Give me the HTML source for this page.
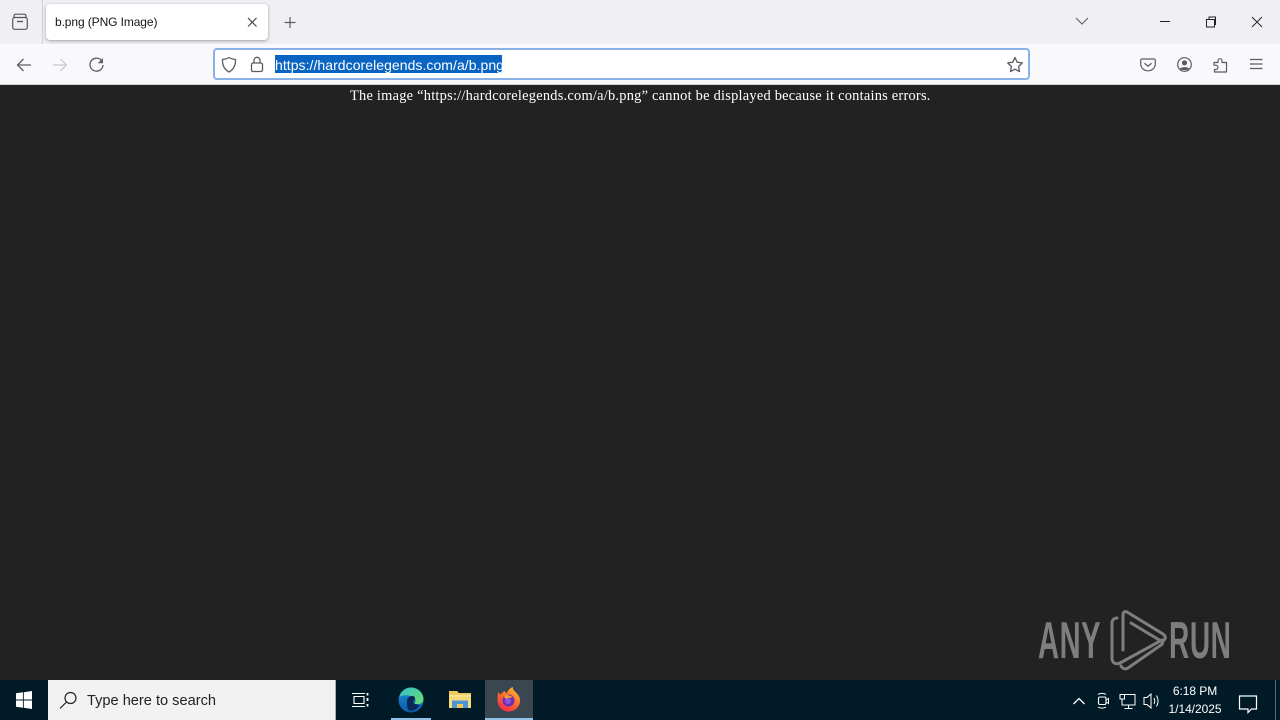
<!DOCTYPE html>
<html><head><meta charset="utf-8"><style>
html,body{margin:0;padding:0;width:1280px;height:720px;overflow:hidden;background:#222222;font-family:"Liberation Sans",sans-serif}
.a{position:absolute;white-space:nowrap}
svg{position:absolute;overflow:visible}
</style></head><body>
<div class="a" style="left:0;top:0;width:1280px;height:44px;background:#f0f0f4"></div>
<div class="a" style="left:0;top:44px;width:1280px;height:40px;background:#f9f9fb"></div>
<div class="a" style="left:0;top:84px;width:1280px;height:1px;background:#d4d4d8"></div>
<div class="a" style="left:42px;top:0;width:1px;height:44px;background:#cfcfd8"></div>

<svg style="left:0;top:0" width="1280" height="85" fill="none" stroke="#55555c" stroke-width="1.200">
<path d="M14 17.500V15.800a1.600 1.600 0 0 1 1.600-1.600h8.800a1.600 1.600 0 0 1 1.600 1.600v1.700"/>
<rect x="12.700" y="17.500" width="14.600" height="11.800" rx="2"/>
<path d="M17 21.500h6" stroke-width="1.400"/>
<path d="M290 17v11M284.500 22.500h11" stroke="#5c5c63"/>
<path d="M1076 18l6 6 6-6" stroke="#66666d"/>
<path d="M1160 21.500h10" stroke="#222" stroke-width="1"/>
<rect x="1206.500" y="19.500" width="8" height="7.500" stroke="#222" stroke-width="1"/>
<path d="M1209 19v-2h6.500v7.500h-1.500" stroke="#222" stroke-width="1"/>
<path d="M1252 17l10 10M1262 17l-10 10" stroke="#222" stroke-width=".9"/>
<path d="M31 65H17.500M23.500 59l-6 6 6 6" stroke="#5c5c63" stroke-width="1.300"/>
<path d="M53 65h13.500M60.500 59l6 6-6 6" stroke="#c6c6cc" stroke-width="1.200"/>
<path d="M101.500 60.500A6.500 6.500 0 1 0 103 65" stroke="#5c5c63" stroke-width="1.300"/>
<path d="M103 58v5.200h-5.200z" fill="#5c5c63" stroke="none"/>
<path d="M1142 59h12a1.300 1.300 0 0 1 1.300 1.300V64a7.300 6.800 0 0 1-14.600 0v-3.700A1.300 1.300 0 0 1 1142 59z" stroke="#5b5b63" stroke-width="1.200"/>
<path d="M1144.500 63.200l3.500 3 3.500-3" stroke="#5b5b63" stroke-width="1.300"/>
<circle cx="1184.500" cy="64.500" r="6.800" stroke="#5b5b63" stroke-width="1.200"/>
<circle cx="1184.500" cy="62.800" r="2.600" fill="#5b5b63" stroke="none"/>
<path d="M1179.800 68.800c1.500-2.200 7.900-2.200 9.400 0-1.500 1.700-7.900 1.700-9.400 0z" fill="#5b5b63" stroke="none"/>
<path d="M1214 62.500h4v-1.800a2 2 0 0 1 4 0v1.800h4.500v9.500h-12v-2.500h1.300a2 2 0 0 0 0-4.300H1214z" stroke="#5b5b63" stroke-width="1.200" stroke-linejoin="round"/>
<path d="M1250 59.500h12.500M1250 64h12.500M1250 68.500h12.500" stroke="#5b5b63" stroke-width="1.200"/>
</svg>

<div class="a" style="left:46px;top:4px;width:222px;height:36px;background:#fff;border-radius:4px;box-shadow:0 1px 3px rgba(0,0,0,.35)"></div>
<div class="a" style="left:55px;top:15px;font-size:12px;line-height:15px;color:#15141a;letter-spacing:-.1px">b.png (PNG Image)</div>
<svg style="left:0;top:0" width="1280" height="40" fill="none" stroke="#4a4a52" stroke-width="1.200"><path d="M248 18l8.500 8.500M256.500 18l-8.500 8.500"/></svg>

<div class="a" style="left:213px;top:48px;width:813px;height:28px;background:#fff;border:2px solid #8ab0e8;border-radius:4px"></div>
<div class="a" style="left:275px;top:55px;width:227px;height:18px;background:#0a64c2"></div>
<div class="a" style="left:275px;top:56px;font-size:14px;line-height:18px;color:#fff;letter-spacing:.05px">https://hardcorelegends.com/a/b.png</div>
<svg style="left:0;top:0" width="1280" height="85" fill="none" stroke="#5b5b63" stroke-width="1.300">
<path d="M229 57.500c2 1.300 4 1.800 6.500 2 .3 6-2 10-6.500 12.500-4.500-2.500-6.800-6.500-6.500-12.500 2.500-.2 4.500-.7 6.500-2z"/>
<rect x="251.500" y="63" width="11" height="8.500" rx="1.500"/>
<path d="M254 63v-2.700a3 3 0 0 1 6 0V63"/>
<path d="M1015 57.500l2.200 4.700 5.100.7-3.700 3.600.9 5.100-4.500-2.400-4.500 2.400.9-5.100-3.700-3.600 5.100-.7z" stroke-linejoin="round"/>
</svg>

<div class="a" style="left:350px;top:88px;font-family:'Liberation Serif',serif;font-size:14.400px;line-height:17px;color:#fff;letter-spacing:.24px">The image “https://hardcorelegends.com/a/b.png” cannot be displayed because it contains errors.</div>

<div class="a" style="left:1038px;top:612px;font-size:52px;line-height:58px;color:#7e7e7e;font-weight:bold;transform:scaleX(.56);transform-origin:0 0;letter-spacing:1px">ANY</div>
<div class="a" style="left:1169px;top:612px;font-size:52px;line-height:58px;color:#7e7e7e;font-weight:bold;transform:scaleX(.54);transform-origin:0 0;letter-spacing:1px">RUN</div>
<svg style="left:1px;top:0" width="1280" height="720" fill="none" stroke="#7e7e7e" stroke-width="3" stroke-linejoin="round" stroke-linecap="round">
<path d="M1116 618c-3 0-5 2-5 5v35c0 5 4 7 8 5l42-23"/>
<path d="M1122 650V615c0-3 2-4 4-3l36 22c3 2 3 5 0 7"/>
<path d="M1130 623l30 18c2 1 2 3 0 4l-33 23c-3 2-6 0-7-2"/>
</svg>

<div class="a" style="left:0;top:680px;width:1280px;height:40px;background:#001a28"></div>
<svg style="left:0;top:680px" width="48" height="40"><path fill="#fff" d="M16 13.200l6.900-.9v7.200H16zM23.800 12.200l8.200-1.200v8.500h-8.200zM16 20.500h6.900v7.200l-6.900-.9zM23.800 20.500H32V29l-8.200-1.200z"/></svg>
<div class="a" style="left:48px;top:680px;width:287px;height:40px;background:#f2f2f2;border-right:1px solid #a8b0b5;box-sizing:content-box"></div>
<svg style="left:48px;top:680px" width="40" height="40" fill="none" stroke="#222" stroke-width="1.200"><circle cx="22.500" cy="18" r="5.500"/><path d="M18.500 22l-6.500 6.500"/></svg>
<div class="a" style="left:87px;top:692px;font-size:14.600px;line-height:19px;color:#222">Type here to search</div>

<svg style="left:340px;top:680px" width="200" height="40" fill="none" stroke="#fff" stroke-width="1.100">
<path d="M12 13.500h13M12 26.500h13M14 16.500h10v7H14z"/>
<path d="M27.500 13v2.500M27.500 18v3M27.500 24v2.500" stroke-width="1.800"/>
</svg>

<div class="a" style="left:391px;top:718px;width:40px;height:2px;background:#8fc0e8"></div>
<svg style="left:398px;top:687px" width="26" height="26" viewBox="0 0 26 26">
<defs><linearGradient id="e1" x1="0" y1="0" x2="1" y2="1"><stop offset="0" stop-color="#35c1c4"/><stop offset="1" stop-color="#6fdc72"/></linearGradient><linearGradient id="e2" x1="0" y1="0" x2="0" y2="1"><stop offset="0" stop-color="#1a8fd8"/><stop offset="1" stop-color="#0c5aa8"/></linearGradient></defs>
<circle cx="13" cy="13" r="12.500" fill="url(#e2)"/>
<path d="M1.500 10C3 4 8 .5 13 .5c7 0 12.500 5.500 12.500 11.500 0 3-2 5-5 5h-5c2-1 2.500-3 1.500-5-2-4-11-5-15.500-2z" fill="url(#e1)"/>
<path d="M9 14c0-3 2-5 5-5 2 0 3 1 3 2.500 0 2-2 3-2 3 .5 2 3 3.500 6.500 3.500-2 4-6 6-10 5.500C9 23 9 17 9 14z" fill="#0a2a55"/>
</svg>

<svg style="left:449px;top:691px" width="22" height="17" viewBox="0 0 22 17">
<path d="M0 0h8l2 2h12v15H0z" fill="#f0c95a"/><path d="M0 4h22v1.500H0z" fill="#f9e69a"/>
<path d="M0 5.500h22V17H0z" fill="#f6d97a"/>
<path d="M3 9.500h16v7.500h-5v-4H8v4H3z" fill="#4a97d2"/><path d="M8 13h6v4H8z" fill="#f0c95a"/>
</svg>

<div class="a" style="left:485px;top:680px;width:48px;height:40px;background:#3a4750"></div>
<div class="a" style="left:485px;top:718px;width:48px;height:2px;background:#8fc0e8"></div>
<svg style="left:497px;top:687px" width="24" height="25" viewBox="0 0 24 25">
<defs><linearGradient id="f1" x1="0.800" y1="0" x2="0.200" y2="1"><stop offset="0" stop-color="#ffb92e"/><stop offset=".5" stop-color="#ff6a2c"/><stop offset="1" stop-color="#f0264f"/></linearGradient></defs>
<path d="M1.500 5C3 7 3 8 4 7c1-1 2-2 3.500-3 .5 1 1 1.500 2.500 2 1-3 3-5 6-6-.5 2 .5 3 2 4.500 3 3 5 5 5 9 0 6-5 11-11.500 11S.5 19.500.500 13C.5 10 .5 7 1.500 5z" fill="url(#f1)"/>
<circle cx="11.500" cy="13.500" r="6" fill="#6a2fb5"/>
<path d="M7 9c3-1.500 7-1 9 2-2-1-4-.5-5 1-2 .5-3.500-1-4-3z" fill="#ff9e2c"/>
<circle cx="11" cy="14" r="3" fill="#8f55d8"/>
</svg>

<svg style="left:1060px;top:680px" width="220" height="40" fill="none" stroke="#fff" stroke-width="1.100">
<path d="M13.500 24l5.500-5.500 5.500 5.500" stroke-width="1.300"/>
<rect x="38.500" y="17" width="7.500" height="7.500" rx="1.500"/><path d="M46 20l2.500-1.500v5L46 22M38 14.500c2-1.500 6-1.500 8 0M38 27c2 1.500 6 1.500 8 0" stroke-width="1"/>
<path d="M60 14.500h4.500V19H60zM64.500 14.500h10.500v10.500H62V19M68.500 25v3M64.500 28.500h8" stroke-width="1"/>
<path d="M84 17.500h3l4-3.500v14l-4-3.500h-3zM94 18c1 2 1 4 0 6M96.500 15.500c2 3.500 2 7.500 0 11" stroke-width="1"/>
<path d="M179.500 16h17v13h-5l-3.500 3.500V29h-8.500z" stroke-width="1.200"/>
</svg>
<div class="a" style="left:1164px;top:683px;width:62px;text-align:center;font-size:12px;line-height:16px;color:#fff;letter-spacing:-.05px">6:18 PM</div>
<div class="a" style="left:1164px;top:701px;width:62px;text-align:center;font-size:12px;line-height:16px;color:#fff;letter-spacing:-.05px">1/14/2025</div>
<div class="a" style="left:1275px;top:680px;width:1px;height:40px;background:#5a6870"></div>
</body></html>
